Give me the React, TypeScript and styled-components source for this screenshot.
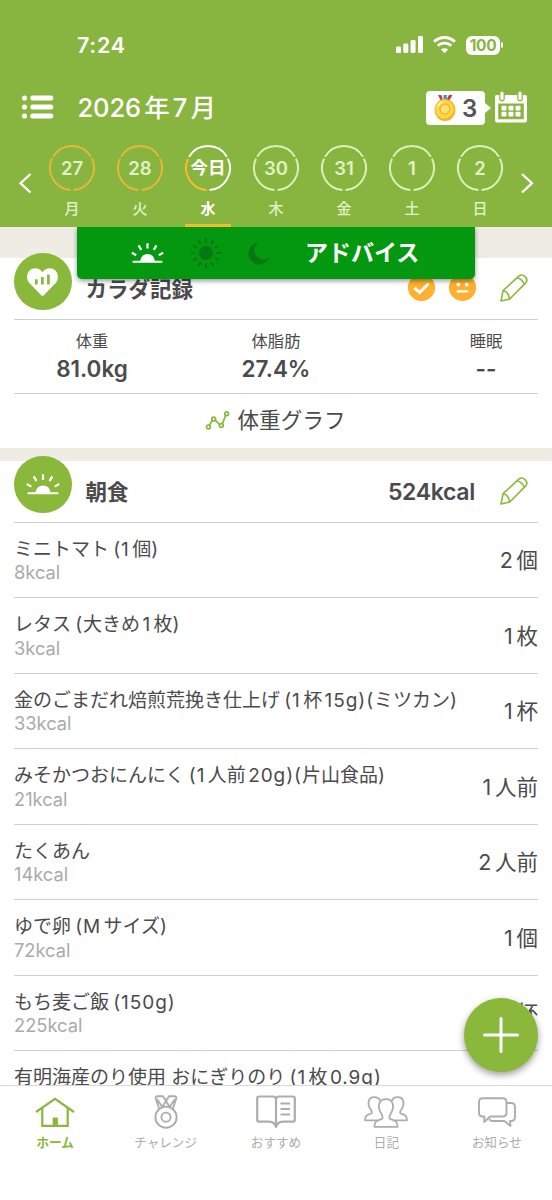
import React from "react";
import styled, { createGlobalStyle } from "styled-components";

const GREEN = "#8ab83a";
const HEADER = "#88b540";
const INK = "#4b4b4b";
const MUTED = "#aaaaaa";
const ORANGE = "#ffb02e";

const Global = createGlobalStyle`
  * { box-sizing: border-box; }
  body {
    margin: 0;
    background: #fff;
    color: ${INK};
    font-family: Inter, "Noto Sans CJK JP", sans-serif;
    text-autospace: normal;
  }
  svg { display: block; flex: none; overflow: visible; }
`;

const Screen = styled.div`
  position: relative;
  display: flex;
  flex-direction: column;
  width: 552px;
  height: 1200px;
  overflow: hidden;
  background: #fff;
`;

/* ---------- header ---------- */

const Header = styled.header`
  position: relative;
  z-index: 2;
  flex: none;
  height: 227px;
  background: ${HEADER};
  color: #fff;
`;

const StatusBar = styled.div`
  display: flex;
  align-items: center;
  height: 90px;
  padding: 0 49px 0 77px;
  gap: 10px;
`;

const Clock = styled.div`
  flex: 1;
  font-size: 21.5px;
  font-weight: 600;
  line-height: 30px;
  letter-spacing: 0.7px;
`;

const Battery = styled.div`
  position: relative;
  width: 34px;
  height: 19px;
  margin-right: 3px;
  border-radius: 6px;
  background: #fff;
  color: ${HEADER};
  font-size: 15.5px;
  font-weight: 700;
  line-height: 19px;
  letter-spacing: -0.4px;
  text-align: center;

  &::after {
    content: "";
    position: absolute;
    left: 35px;
    top: 6.5px;
    width: 2px;
    height: 6px;
    border-radius: 0 2px 2px 0;
    background: #fff;
  }
`;

const TitleBar = styled.div`
  display: flex;
  align-items: center;
  height: 36px;
  padding: 0 25px 0 22px;
`;

const Lifted = styled.div`
  margin-top: -2px;
`;

const Month = styled.h1`
  flex: 1;
  margin: -1px 0 0 23.5px;
  font-size: 25.5px;
  font-weight: 450;
  line-height: 36px;
  letter-spacing: -0.1px;
`;

const MedalBadge = styled.div`
  position: relative;
  display: flex;
  align-items: center;
  gap: 6px;
  width: 59px;
  height: 34px;
  margin-right: 10px;
  padding-left: 8px;
  border-radius: 4px;
  background: #fff;
  color: #555;
  font-size: 24px;
  font-weight: 600;

  &::after {
    content: "";
    position: absolute;
    left: 58.5px;
    top: 12px;
    border: 5px solid transparent;
    border-left: 6px solid #fff;
    border-right: 0;
  }
`;

const Week = styled.div`
  display: flex;
  justify-content: space-between;
  height: 101px;
  padding: 0 19px;
`;

const ArrowSlot = styled.div`
  padding-top: 47px;
`;

const Days = styled.div`
  display: flex;
`;

const Day = styled.div<{ $today?: boolean }>`
  display: flex;
  flex-direction: column;
  align-items: center;
  width: 68px;
  padding-top: 19px;
  color: ${(p) => (p.$today ? "#fff" : "#e0f1c4")};
  font-weight: ${(p) => (p.$today ? 700 : 500)};
`;

const DayRing = styled.div`
  display: grid;
  place-items: center;
  width: 46px;
  height: 46px;

  & > * { grid-area: 1 / 1; }
`;

const DayNumber = styled.span<{ $today?: boolean }>`
  font-size: ${(p) => (p.$today ? "17.5px" : "18.5px")};
  font-weight: 600;
  line-height: 24px;
`;

const Weekday = styled.span`
  margin-top: 7px;
  font-size: 15px;
  line-height: 22px;
`;

const TodayMark = styled.div`
  width: 46px;
  height: 3px;
  margin-top: 4px;
  background: #f3ba32;
`;

const AdviceBanner = styled.div`
  position: absolute;
  left: 77px;
  top: 227px;
  display: flex;
  align-items: center;
  width: 398px;
  height: 52px;
  padding-left: 55px;
  border-radius: 0 0 5px 5px;
  background: #03980f;
  box-shadow: 0 2px 5px rgba(0, 0, 0, 0.4);
  clip-path: inset(0 -12px -12px -12px);
`;

const IconGroup = styled.div`
  display: flex;
  align-items: center;
  gap: 28px;
`;

const BannerText = styled.span`
  margin-left: 35px;
  font-size: 23px;
  font-weight: 700;
  line-height: 34px;
`;

/* ---------- content ---------- */

const Gap = styled.div<{ $h: number }>`
  flex: none;
  height: ${(p) => p.$h}px;
  background: #efece4;
`;

const Section = styled.section`
  flex: none;
  padding: 0 14px;
`;

const SectionHead = styled.div`
  display: flex;
  align-items: center;
  height: 61.5px;
  padding-right: 10px;
  border-bottom: 1px solid #cfcfcf;
`;

const RoundIcon = styled.div`
  display: flex;
  align-items: center;
  justify-content: center;
  flex: none;
  width: 57.5px;
  height: 57.5px;
  margin-top: -13.5px;
  border-radius: 50%;
  background: ${GREEN};
`;

const SectionTitle = styled.h2`
  flex: 1;
  margin: 1px 0 0 14px;
  font-size: 21.5px;
  font-weight: 700;
  line-height: 30px;
`;

const Total = styled.span`
  margin: 2px 25px 0 0;
  font-size: 23px;
  font-weight: 600;
  letter-spacing: -0.3px;
`;

const Moods = styled.div`
  display: flex;
  gap: 14.4px;
  margin: -1px 24px 0 0;
`;

const Stats = styled.div`
  display: grid;
  grid-template-columns: 156px 212px 156px;
  height: 74px;
  padding-top: 9px;
  border-bottom: 1px solid #cfcfcf;
  text-align: center;
`;

const Stat = styled.div<{ $indent?: number }>`
  padding-left: ${(p) => p.$indent ?? 0}px;
`;

const StatLabel = styled.div`
  font-size: 16.3px;
  line-height: 24px;
`;

const StatValue = styled.div`
  margin-top: 1.5px;
  font-size: 22.5px;
  font-weight: 600;
  line-height: 30px;
`;

const GraphLink = styled.div`
  display: flex;
  align-items: center;
  justify-content: center;
  gap: 9px;
  height: 54.5px;
  padding: 0 1px 2px 0;
  font-size: 21.6px;
  line-height: 30px;
`;

const Food = styled.div`
  display: flex;
  align-items: center;
  justify-content: space-between;
  height: 75.5px;
  border-bottom: 1px solid #cfcfcf;
`;

const FoodName = styled.div`
  font-size: 19px;
  line-height: 26px;
  white-space: nowrap;
`;

const LatinRun = styled.span<{ $apart: boolean }>`
  margin-left: ${(p) => (p.$apart ? 4.2 : 0)}px;
  letter-spacing: 0.95px;
`;

const FoodKcal = styled.div`
  margin-top: -1.5px;
  font-size: 18.3px;
  line-height: 22px;
  color: ${MUTED};
`;

const Quantity = styled.div`
  margin-top: -2px;
  font-size: 21.5px;
`;

/* ---------- bottom ---------- */

const Fab = styled.div`
  position: absolute;
  z-index: 3;
  left: 464px;
  top: 998px;
  display: flex;
  align-items: center;
  justify-content: center;
  width: 74px;
  height: 74px;
  border-radius: 50%;
  background: ${GREEN};
  box-shadow: 0 3px 7px rgba(0, 0, 0, 0.4);
`;

const TabBar = styled.nav`
  position: absolute;
  z-index: 2;
  left: 0;
  bottom: 0;
  display: flex;
  width: 552px;
  height: 115px;
  border-top: 1px solid #d8d8d8;
  background: #fff;
`;

const Tab = styled.div<{ $active?: boolean }>`
  display: flex;
  flex: 1;
  flex-direction: column;
  align-items: center;
  padding-top: 8px;
  color: ${(p) => (p.$active ? GREEN : "#adadad")};
  font-size: 12.6px;
  font-weight: ${(p) => (p.$active ? 700 : 400)};
  line-height: 18px;
`;

const TabIcon = styled.div`
  display: flex;
  align-items: center;
  height: 36px;
  margin-bottom: 4px;
`;

/* ---------- drawings ---------- */

const arc = (from: number, to: number) => {
  const pt = (deg: number) => {
    const a = (deg * Math.PI) / 180;
    return `${(23 + 22 * Math.cos(a)).toFixed(2)} ${(23 + 22 * Math.sin(a)).toFixed(2)}`;
  };
  return `M${pt(from)}A22 22 0 0 1 ${pt(to)}`;
};

const Ring = ({ top, right, left }: { top: string; right: string; left: string }) => (
  <svg width="46" height="46" fill="none" strokeWidth="2">
    <path d={arc(211, 329)} stroke={top} />
    <path d={arc(-25, 86)} stroke={right} />
    <path d={arc(94, 205)} stroke={left} />
  </svg>
);

const Chevron = ({ right }: { right?: boolean }) => (
  <svg width="12" height="20" fill="none" stroke="#fff" strokeWidth="2.3">
    <path d={right ? "M1 1L11 10.2L1 19.5" : "M11.5 1L1.5 10.2L11.5 19.5"} />
  </svg>
);

const Signal = () => (
  <svg width="27" height="18" fill="#fff">
    <rect x="0" y="10.5" width="5" height="6.5" rx="1.3" />
    <rect x="7.3" y="7.5" width="5" height="9.5" rx="1.3" />
    <rect x="14.6" y="4" width="5" height="13" rx="1.3" />
    <rect x="22" y="0" width="5" height="17" rx="1.3" />
  </svg>
);

const Wifi = () => (
  <svg width="23" height="18" viewBox="0 0 23 18" fill="none" stroke="#fff" strokeWidth="2.9">
    <path d="M1.1 5.7A15 15 0 0 1 21.9 5.7" />
    <path d="M4.8 9.8A9.6 9.6 0 0 1 18.2 9.8" />
    <path d="M11.5 17.3L7.9 13.6A5.2 5.2 0 0 1 15.1 13.6Z" fill="#fff" stroke="none" />
  </svg>
);

const MenuIcon = () => (
  <svg width="32" height="24" fill="#fff">
    {[3, 12, 21].map((y) => (
      <g key={y}>
        <circle cx="2.5" cy={y} r="2.6" />
        <rect x="8.3" y={y - 2.5} width="23" height="5" rx="2.5" />
      </g>
    ))}
  </svg>
);

const Medal = () => (
  <svg width="22" height="28" viewBox="0 0 22 28">
    <path d="M4 1H7.5L10 6H6.5Z" fill="#c8394b" />
    <path d="M7.5 1H9.5L11 5L12.5 1H15L13 7H9Z" fill="#f3f3f3" />
    <path d="M9.3 1H13L12.5 6H9.7Z" fill="#4a90d0" />
    <path d="M15 1H18.5L15.5 6H12.3Z" fill="#c8394b" />
    <ellipse cx="11" cy="16" rx="10.5" ry="11" fill="#f5b21c" />
    <circle cx="10.5" cy="15.2" r="9.2" fill="#ffd94a" />
    <circle cx="11" cy="15" r="5" fill="#ffe372" stroke="#f6b423" strokeWidth="1.4" />
    <path d="M4 13Q5.5 8.5 9 7.7" fill="none" stroke="#fff5b8" strokeWidth="1.5" />
  </svg>
);

const CalendarIcon = () => (
  <svg width="32" height="32" viewBox="0 0 32 32">
    <path
      fillRule="evenodd"
      fill="#fff"
      d="M1.5 4H30.5Q32 4 32 5.5V29.5Q32 31.5 30 31.5H2Q0 31.5 0 29.5V5.5Q0 4 1.5 4ZM3.2 12.5V28.3H28.8V12.5Z"
    />
    {[7, 25].map((x) => (
      <rect key={x} x={x - 2.2} y="0" width="4.4" height="9.6" rx="2.2" fill="#fff" stroke={HEADER} strokeWidth="1.2" />
    ))}
    {[6.5, 13.5, 20.5].map((x) =>
      [14.8, 20.8].map((y) => <rect key={`${x}-${y}`} x={x} y={y} width="5" height="4.8" rx="0.8" fill="#fff" />)
    )}
  </svg>
);

const Sunrise = ({ size }: { size: number }) => (
  <svg width={size} height={(size * 22) / 34} viewBox="0 0 34 22" stroke="#fff" strokeLinecap="round">
    <path d="M1.5 20.5H32.5" strokeWidth="2.2" />
    <path d="M8.9 20Q10.2 12.2 17 12.2T25.1 20Z" fill="#fff" stroke="none" />
    <path d="M17 6V0.3M10.1 7.5L7.2 2.6M23.9 7.5L26.8 2.6M4.6 13.4L-0.2 10.7M29.4 13.4L34.2 10.7" strokeWidth="2.4" strokeLinecap="butt" />
  </svg>
);

const Sun = () => (
  <svg width="30" height="30" viewBox="-15 -15 30 30" stroke="#067811" strokeWidth="1.9">
    <circle r="7" fill="#067811" stroke="none" />
    {Array.from({ length: 12 }, (_, i) => (
      <path key={i} d="M0 -10.5V-15" transform={`rotate(${i * 30})`} />
    ))}
  </svg>
);

const Moon = () => (
  <svg width="21" height="22" viewBox="0 0 21 22" fill="#067811">
    <path d="M9 0.5A11 11 0 1 0 20.5 15.6A9.3 9.3 0 0 1 9 0.5Z" />
  </svg>
);

const HeartChart = () => (
  <svg width="31" height="28" viewBox="0 0 31 28">
    <path
      fill="#fff"
      d="M15.5 28Q14.8 28 14 27L3 15.8C-1.1 11.6 -0.6 5.4 2.6 2.4C6.5 -1.2 12.6 -0.4 15.5 4.2C18.4 -0.4 24.5 -1.2 28.4 2.4C31.6 5.4 32.1 11.6 28 15.8L17 27Q16.2 28 15.5 28Z"
    />
    <path d="M9.3 16.5V11.3M15.4 16.5V9M21.4 16.5V6.5" stroke={GREEN} strokeWidth="2.7" />
  </svg>
);

const Pencil = () => (
  <svg width="28" height="28" viewBox="0 0 28 28" fill="none" stroke={GREEN} strokeWidth="1.6" strokeLinejoin="round">
    <path d="M1 27L3.1 16.6L18.8 2.1Q21.9 -0.4 25 2.6Q28.4 5.8 25.7 8.9L9.8 25Z" />
    <path d="M17 3.8Q22.4 5.2 24.3 10.3M3.1 16.6Q8.4 18 9.8 25" />
  </svg>
);

const CheckFace = () => (
  <svg width="27" height="27" viewBox="0 0 27 27" fill="none" stroke="#fff" strokeWidth="3">
    <circle cx="13.5" cy="13.5" r="13.6" fill={ORANGE} stroke="none" />
    <path d="M6.5 14L11.7 18.5L20.7 9.5" />
  </svg>
);

const NeutralFace = () => (
  <svg width="27" height="27" viewBox="0 0 27 27" fill="#fff">
    <circle cx="13.5" cy="13.5" r="13.6" fill={ORANGE} />
    <circle cx="9.3" cy="10.5" r="1.9" />
    <circle cx="17.7" cy="10.5" r="1.9" />
    <rect x="7.7" y="16.3" width="11.6" height="2.2" rx="0.6" />
  </svg>
);

const GraphIcon = () => (
  <svg width="23" height="18" viewBox="0 0 23 18" fill="none" stroke={GREEN} strokeWidth="1.7">
    <path d="M3.4 14.3L6.6 9M9 9.2L13.5 13.3M16.5 12.7L19.6 4.3" />
    <circle cx="2.4" cy="16" r="1.9" />
    <circle cx="7.7" cy="8" r="1.9" />
    <circle cx="15.3" cy="14.5" r="1.9" />
    <circle cx="20.6" cy="2.7" r="1.9" />
  </svg>
);

const Home = () => (
  <svg width="40" height="30" viewBox="0 0 40 30" fill="none" stroke="currentColor" strokeWidth="2.2">
    <path d="M1 15L20 1.8L39 15M7.3 11V28.8H32.7V11" />
    <rect x="17.7" y="20.5" width="5.2" height="8.3" fill="currentColor" stroke="none" />
  </svg>
);

const MedalOutline = () => (
  <svg width="24" height="34" viewBox="0 0 24 34" fill="none" stroke="currentColor" strokeWidth="1.9" strokeLinejoin="round">
    <circle cx="12" cy="22.2" r="10.6" />
    <circle cx="12" cy="22.2" r="4.6" />
    <path d="M5.2 13.8L1.8 3.8Q1.2 1.2 3.6 1.2H9L12 6L15 1.2H20.4Q22.8 1.2 22.2 3.8L18.8 13.8M3 4L8.4 12.2M21 4L15.6 12.2M12 6L8.6 11.4M12 6L15.4 11.4" />
  </svg>
);

const Book = () => (
  <svg width="40" height="34" viewBox="0 0 40 34" fill="none" stroke="currentColor" strokeWidth="2.2" strokeLinejoin="round">
    <path d="M20 32V4.5Q20 1.5 17 1.5H3Q1.2 1.5 1.2 3.3V24.8Q1.2 26.6 3 26.6H13.5C17 26.6 18.8 28.5 20 32C21.2 28.5 23 26.6 26.5 26.6H37Q38.8 26.6 38.8 24.8V3.3Q38.8 1.5 37 1.5H23Q20 1.5 20 4.5" />
    <path d="M24.5 8.5H34M24.5 14H34M24.5 19.5H34" />
  </svg>
);

const People = () => (
  <svg width="44" height="32" viewBox="0 0 44 32" fill="none" stroke="currentColor" strokeWidth="1.8" strokeLinejoin="round">
    <path d="M14.8 24.3H1C1 18.5 4.5 18.8 7.5 17.2Q8.5 16.6 7.2 14.2C2.8 8.5 3.8 1.2 10.3 1.2Q14.8 1.2 16.1 4.8M29.2 24.3H43C43 18.5 39.5 18.8 36.5 17.2Q35.5 16.6 36.8 14.2C41.2 8.5 40.2 1.2 33.7 1.2Q29.2 1.2 27.9 4.8" />
    <path d="M10.4 30.8C10.4 24.2 14.5 24.4 18.2 22.6Q19.3 21.7 17.8 18.6C13 11.2 14.2 3.2 22 3.2S31 11.2 26.2 18.6Q24.7 21.7 25.8 22.6C29.5 24.4 33.6 24.2 33.6 30.8Z" fill="#fff" />
  </svg>
);

const Chat = () => (
  <svg width="38" height="31" viewBox="0 0 38 31" fill="none" stroke="currentColor" strokeWidth="1.9" strokeLinejoin="round">
    <path d="M29 6H33Q37 6 37 10V20Q37 24 33 24H32L32.5 29L26.5 24H14Q11.8 24 11.5 21.5" />
    <path d="M4.5 1.2H24.5Q28.5 1.2 28.5 5.2V15.5Q28.5 19.5 24.5 19.5H12L6.3 25V19.5H4.5Q1 19.5 1 15.5V5.2Q1 1.2 4.5 1.2Z" fill="#fff" />
  </svg>
);

const Plus = () => (
  <svg width="36" height="36" stroke="#fff" strokeWidth="3" strokeLinecap="round">
    <path d="M18 1.5V34.5M1.5 18H34.5" />
  </svg>
);

/* Spaces out the Latin runs of a Japanese string. */
const Mixed = ({ text }: { text: string }) => (
  <>
    {text.split(/([!-~]+)/).map((part, i) =>
      i % 2 ? (
        <LatinRun key={i} $apart={part.startsWith("(")}>
          {part}
        </LatinRun>
      ) : (
        part
      )
    )}
  </>
);

/* ---------- data ---------- */

const DONE = "#e6b838";
const OPEN = "#dcefbd";

const days = [
  { n: "27", w: "月", ring: [DONE, DONE, DONE] },
  { n: "28", w: "火", ring: [DONE, DONE, DONE] },
  { n: "今日", w: "水", ring: ["#fff", "#fff", "#fdbb2c"], today: true },
  { n: "30", w: "木", ring: [OPEN, OPEN, OPEN] },
  { n: "31", w: "金", ring: [OPEN, OPEN, OPEN] },
  { n: "1", w: "土", ring: [OPEN, OPEN, OPEN] },
  { n: "2", w: "日", ring: [OPEN, OPEN, OPEN] },
];

const foods = [
  { name: "ミニトマト(1個)", kcal: "8kcal", qty: "2個" },
  { name: "レタス(大きめ1枚)", kcal: "3kcal", qty: "1枚" },
  { name: "金のごまだれ焙煎荒挽き仕上げ(1杯15g)(ミツカン)", kcal: "33kcal", qty: "1杯" },
  { name: "みそかつおにんにく(1人前20g)(片山食品)", kcal: "21kcal", qty: "1人前" },
  { name: "たくあん", kcal: "14kcal", qty: "2人前" },
  { name: "ゆで卵(Mサイズ)", kcal: "72kcal", qty: "1個" },
  { name: "もち麦ご飯(150g)", kcal: "225kcal", qty: "1杯" },
  { name: "有明海産のり使用 おにぎりのり(1枚0.9g)", kcal: "", qty: "" },
];

const tabs = [
  { label: "ホーム", icon: <Home />, active: true },
  { label: "チャレンジ", icon: <MedalOutline /> },
  { label: "おすすめ", icon: <Book /> },
  { label: "日記", icon: <People /> },
  { label: "お知らせ", icon: <Chat /> },
];

export default function App() {
  return (
    <Screen>
      <Global />
      <Header>
        <StatusBar>
          <Clock>7:24</Clock>
          <Signal />
          <Wifi />
          <Battery>100</Battery>
        </StatusBar>
        <TitleBar>
          <Lifted>
            <MenuIcon />
          </Lifted>
          <Month>2026年7月</Month>
          <MedalBadge>
            <Medal />
            3
          </MedalBadge>
          <Lifted>
            <CalendarIcon />
          </Lifted>
        </TitleBar>
        <Week>
          <ArrowSlot>
            <Chevron />
          </ArrowSlot>
          <Days>
            {days.map((d) => (
              <Day key={d.n} $today={d.today}>
                <DayRing>
                  <Ring top={d.ring[0]} right={d.ring[1]} left={d.ring[2]} />
                  <DayNumber $today={d.today}>{d.n}</DayNumber>
                </DayRing>
                <Weekday>{d.w}</Weekday>
                {d.today && <TodayMark />}
              </Day>
            ))}
          </Days>
          <ArrowSlot>
            <Chevron right />
          </ArrowSlot>
        </Week>
        <AdviceBanner>
          <IconGroup>
            <Sunrise size={31} />
            <Sun />
            <Moon />
          </IconGroup>
          <BannerText>アドバイス</BannerText>
        </AdviceBanner>
      </Header>

      <Gap $h={31} />
      <Section>
        <SectionHead>
          <RoundIcon>
            <HeartChart />
          </RoundIcon>
          <SectionTitle>カラダ記録</SectionTitle>
          <Moods>
            <CheckFace />
            <NeutralFace />
          </Moods>
          <Pencil />
        </SectionHead>
        <Stats>
          <Stat>
            <StatLabel>体重</StatLabel>
            <StatValue>81.0kg</StatValue>
          </Stat>
          <Stat>
            <StatLabel>体脂肪</StatLabel>
            <StatValue>27.4%</StatValue>
          </Stat>
          <Stat $indent={52}>
            <StatLabel>睡眠</StatLabel>
            <StatValue>--</StatValue>
          </Stat>
        </Stats>
        <GraphLink>
          <GraphIcon />
          体重グラフ
        </GraphLink>
      </Section>

      <Gap $h={13} />
      <Section>
        <SectionHead>
          <RoundIcon>
            <Sunrise size={32} />
          </RoundIcon>
          <SectionTitle>朝食</SectionTitle>
          <Total>524kcal</Total>
          <Pencil />
        </SectionHead>
        {foods.map((f) => (
          <Food key={f.name}>
            <div>
              <FoodName>
                <Mixed text={f.name} />
              </FoodName>
              <FoodKcal>{f.kcal || "\u00a0"}</FoodKcal>
            </div>
            <Quantity>
              <Mixed text={f.qty} />
            </Quantity>
          </Food>
        ))}
      </Section>

      <Fab>
        <Plus />
      </Fab>
      <TabBar>
        {tabs.map((t) => (
          <Tab key={t.label} $active={t.active}>
            <TabIcon>{t.icon}</TabIcon>
            {t.label}
          </Tab>
        ))}
      </TabBar>
    </Screen>
  );
}
